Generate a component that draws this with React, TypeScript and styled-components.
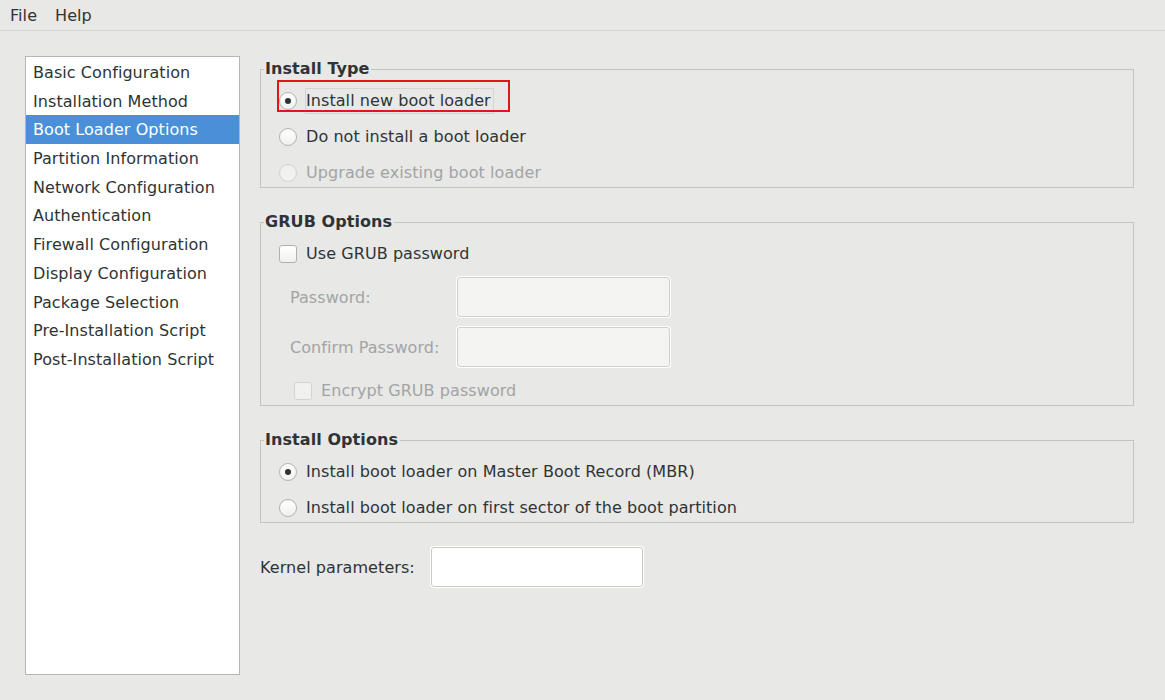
import React from "react";
import styled, { createGlobalStyle } from "styled-components";

const GlobalStyle = createGlobalStyle`
  html, body {
    margin: 0;
    padding: 0;
    background: #e8e8e7;
  }
  body {
    font-family: "DejaVu Sans", "Noto Sans", sans-serif;
    font-size: 16px;
    letter-spacing: 0.07px;
    color: #2e3436;
  }
`;

const Window = styled.div`
  width: 1165px;
  height: 700px;
  display: flex;
  flex-direction: column;
  overflow: hidden;
  background: #e8e8e7;
`;

const MenuBar = styled.div`
  height: 30px;
  border-bottom: 1px solid #d4d4d2;
  display: flex;
  align-items: center;
  padding-left: 1px;
`;

const MenuItem = styled.span`
  padding: 2px 9px 0;
  line-height: 28px;
`;

const Body = styled.div`
  flex: 1;
  display: flex;
  align-items: flex-start;
  gap: 20px;
  padding: 25px 0 0 25px;
`;

const Sidebar = styled.ul`
  list-style: none;
  margin: 0;
  padding: 1px 0 0;
  width: 215px;
  height: 619px;
  box-sizing: border-box;
  border: 1px solid #b6b6b3;
  background: #ffffff;
  flex: none;
`;

const SidebarItem = styled.li<{ $selected?: boolean }>`
  height: 28.7px;
  line-height: 30px;
  padding-left: 7px;
  white-space: nowrap;
  overflow: hidden;
  background: ${(p) => (p.$selected ? "#4a90d9" : "transparent")};
  color: ${(p) => (p.$selected ? "#ffffff" : "#2e3436")};
`;

const Content = styled.div`
  width: 874px;
  margin-top: 3px;
  display: flex;
  flex-direction: column;
  gap: 24px;
`;

const Frame = styled.fieldset`
  margin: 0;
  padding: 0;
  border: 1px solid #c3c3c1;
  min-inline-size: auto;
  box-sizing: border-box;
`;

const Legend = styled.legend`
  margin-left: 3px;
  padding: 0 2px 0 1px;
  font-weight: bold;
  line-height: 20px;
  color: #2e3436;
`;

const FrameBody = styled.div<{ $top?: number; $bottom?: number }>`
  display: flex;
  flex-direction: column;
  gap: 10px;
  padding: ${(p) => p.$top ?? 9}px 0 ${(p) => p.$bottom ?? 1}px 18px;
`;

const Choice = styled.label<{ $disabled?: boolean; $indent?: number; $shift?: number }>`
  position: relative;
  display: flex;
  align-items: center;
  gap: 8px;
  height: 26px;
  margin-left: ${(p) => p.$indent ?? 0}px;
  margin-top: ${(p) => p.$shift ?? 0}px;
  color: ${(p) => (p.$disabled ? "#a2a4a4" : "#2e3436")};
`;

const ChoiceText = styled.span<{ $focused?: boolean }>`
  border: 1px solid ${(p) => (p.$focused ? "#d4d4d2" : "transparent")};
  line-height: 24px;
  padding: 0 2px 0 0;
  white-space: nowrap;
`;

const RadioMark = styled.span<{ $checked?: boolean; $disabled?: boolean }>`
  flex: none;
  width: 18px;
  height: 18px;
  box-sizing: border-box;
  border-radius: 50%;
  border: 1px solid ${(p) => (p.$disabled ? "#d3d3d1" : "#b1b1ae")};
  background: ${(p) =>
    p.$disabled ? "#f1f1f0" : "linear-gradient(#ffffff, #f1f1ef)"};
  display: flex;
  align-items: center;
  justify-content: center;

  &::after {
    content: "";
    display: ${(p) => (p.$checked ? "block" : "none")};
    width: 6px;
    height: 6px;
    border-radius: 50%;
    background: #2e3436;
  }
`;

const CheckMark = styled.span<{ $disabled?: boolean }>`
  flex: none;
  width: 18px;
  height: 18px;
  box-sizing: border-box;
  border-radius: 3px;
  border: 1px solid ${(p) => (p.$disabled ? "#d3d3d1" : "#b1b1ae")};
  background: ${(p) =>
    p.$disabled ? "#f1f1f0" : "linear-gradient(#ffffff, #f1f1ef)"};
`;

const Annotation = styled.span`
  position: absolute;
  left: -2px;
  top: -8px;
  width: 233px;
  height: 32px;
  box-sizing: border-box;
  border: 2px solid #e3141c;
  pointer-events: none;
`;

const PasswordGrid = styled.div`
  display: grid;
  grid-template-columns: 167px 213px;
  row-gap: 10px;
  align-items: center;
  margin: 0 0 0 11px;
`;

const FieldLabel = styled.span<{ $disabled?: boolean }>`
  color: ${(p) => (p.$disabled ? "#a2a4a4" : "#2e3436")};
  white-space: nowrap;
`;

const TextInput = styled.input<{ $width: number }>`
  width: ${(p) => p.$width}px;
  height: 40px;
  box-sizing: border-box;
  border: 1px solid #cdcac6;
  border-radius: 3px;
  background: #ffffff;
  box-shadow: 0 0 0 1px #ffffff;
  margin: 0;
  padding: 0 8px;
  font: inherit;
  color: #2e3436;
  outline: none;

  &:disabled {
    background: #f4f4f3;
    border-color: #cfcfcd;
  }
`;

const KernelRow = styled.div`
  display: flex;
  align-items: center;
`;

const KernelLabel = styled.span`
  width: 171px;
  flex: none;
  white-space: nowrap;
`;

const navItems = [
  "Basic Configuration",
  "Installation Method",
  "Boot Loader Options",
  "Partition Information",
  "Network Configuration",
  "Authentication",
  "Firewall Configuration",
  "Display Configuration",
  "Package Selection",
  "Pre-Installation Script",
  "Post-Installation Script",
];

function Radio(props: {
  label: string;
  checked?: boolean;
  disabled?: boolean;
  focused?: boolean;
  annotated?: boolean;
}) {
  return (
    <Choice $disabled={props.disabled}>
      <RadioMark $checked={props.checked} $disabled={props.disabled} />
      <ChoiceText $focused={props.focused}>{props.label}</ChoiceText>
      {props.annotated && <Annotation />}
    </Choice>
  );
}

function Check(props: {
  label: string;
  disabled?: boolean;
  indent?: number;
  shift?: number;
}) {
  return (
    <Choice $disabled={props.disabled} $indent={props.indent} $shift={props.shift}>
      <CheckMark $disabled={props.disabled} />
      <ChoiceText>{props.label}</ChoiceText>
    </Choice>
  );
}

export default function App() {
  return (
    <>
      <GlobalStyle />
      <Window>
        <MenuBar>
          <MenuItem>File</MenuItem>
          <MenuItem>Help</MenuItem>
        </MenuBar>
        <Body>
          <Sidebar>
            {navItems.map((item) => (
              <SidebarItem key={item} $selected={item === "Boot Loader Options"}>
                {item}
              </SidebarItem>
            ))}
          </Sidebar>
          <Content>
            <Frame>
              <Legend>Install Type</Legend>
              <FrameBody>
                <Radio label="Install new boot loader" checked focused annotated />
                <Radio label="Do not install a boot loader" />
                <Radio label="Upgrade existing boot loader" disabled />
              </FrameBody>
            </Frame>
            <Frame>
              <Legend>GRUB Options</Legend>
              <FrameBody $top={9} $bottom={1}>
                <Check label="Use GRUB password" />
                <PasswordGrid>
                  <FieldLabel $disabled>Password:</FieldLabel>
                  <TextInput $width={213} type="password" disabled />
                  <FieldLabel $disabled>Confirm Password:</FieldLabel>
                  <TextInput $width={213} type="password" disabled />
                </PasswordGrid>
                <Check label="Encrypt GRUB password" disabled indent={15} shift={1} />
              </FrameBody>
            </Frame>
            <Frame>
              <Legend>Install Options</Legend>
              <FrameBody>
                <Radio label="Install boot loader on Master Boot Record (MBR)" checked />
                <Radio label="Install boot loader on first sector of the boot partition" />
              </FrameBody>
            </Frame>
            <KernelRow>
              <KernelLabel>Kernel parameters:</KernelLabel>
              <TextInput $width={212} type="text" />
            </KernelRow>
          </Content>
        </Body>
      </Window>
    </>
  );
}
